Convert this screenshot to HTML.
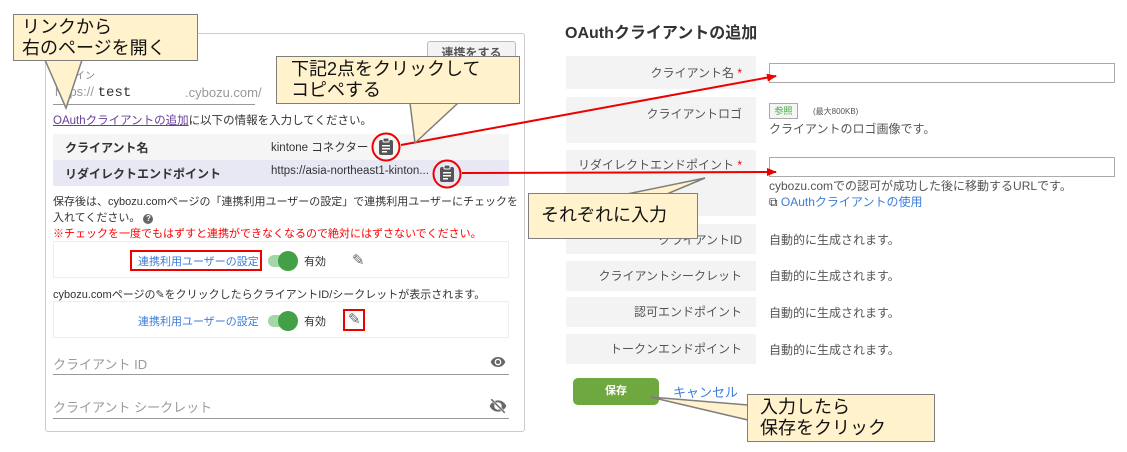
<!DOCTYPE html>
<html><head><meta charset="utf-8"><style>
*{margin:0;padding:0;box-sizing:border-box}
body{width:1127px;height:452px;background:#fff;position:relative;overflow:hidden;font-family:"Liberation Sans","Noto Sans CJK JP",sans-serif;color:#333;font-size:12px}
.a{position:absolute;white-space:nowrap}
.co{position:absolute;background:#fff2cc;border:1.5px solid #7f7f7f;font-size:17px;line-height:21px;color:#111;padding:0 0 0 8px}
.lc{position:absolute;left:566px;width:190px;background:#f3f3f3;text-align:right;padding-right:14px;color:#555;font-size:12px}
.rt{position:absolute;left:769px;color:#555;font-size:12px}
.inp{position:absolute;left:769px;width:346px;height:20px;border:1px solid #aaa;background:#fff}
.tg{position:absolute;width:26px;height:12px;border-radius:6px;background:#a5d6a7}
.tg i{position:absolute;right:-4px;top:-4px;width:20px;height:20px;border-radius:50%;background:#43a047}
</style></head><body>
<!-- left panel -->
<div class="a" style="left:45px;top:33px;width:480px;height:399px;border:1px solid #ccc;border-radius:3px"></div>
<div class="a" style="left:427px;top:41px;width:89px;height:25px;border:1px solid #bbb;background:#f3f3f3;border-radius:3px;font-size:12px;font-weight:bold;color:#555;text-align:center;line-height:23px">連携をする</div>
<div class="a" style="left:55px;top:48px;font-size:16px;font-weight:bold;color:#333">ns</div>
<div class="a" style="left:55px;top:67px;font-size:10px;color:#888">ドメイン</div>
<div class="a" style="left:55px;top:84px;font-size:13px;color:#999">https:// <span style="color:#333;font-family:'Liberation Mono',monospace;font-size:14px">test</span></div>
<div class="a" style="left:185px;top:85px;font-size:13px;color:#999">.cybozu.com/</div>
<div class="a" style="left:53px;top:104px;width:202px;height:1px;background:#999"></div>
<div class="a" style="left:53px;top:112px;font-size:11.5px"><span style="color:#6a3d9a;text-decoration:underline">OAuthクライアントの追加</span>に以下の情報を入力してください。</div>
<div class="a" style="left:53px;top:134px;width:456px;height:26px;background:#f5f5f5"></div>
<div class="a" style="left:53px;top:160px;width:456px;height:26px;background:#e8e8f4"></div>
<div class="a" style="left:65px;top:139px;font-weight:bold;font-size:12px">クライアント名</div>
<div class="a" style="left:65px;top:165px;font-weight:bold;font-size:12px">リダイレクトエンドポイント</div>
<div class="a" style="left:271px;top:139px;font-size:11.5px">kintone コネクター</div>
<div class="a" style="left:271px;top:165px;font-size:11.5px">https://asia-northeast1-kinton...</div>
<svg class="a" style="left:370px;top:131px" width="32" height="32" viewBox="0 0 32 32"><circle cx="16" cy="16" r="13.5" fill="none" stroke="#e00" stroke-width="2"/><rect x="9" y="9" width="14" height="15" rx="2" fill="#555"/><rect x="13" y="7" width="6" height="4" rx="1" fill="#555" stroke="#fff" stroke-width="1"/><rect x="12" y="14" width="8" height="1.5" fill="#fff"/><rect x="12" y="17" width="8" height="1.5" fill="#fff"/><rect x="12" y="20" width="5" height="1.5" fill="#fff"/></svg>
<svg class="a" style="left:431px;top:158px" width="32" height="32" viewBox="0 0 32 32"><circle cx="16" cy="16" r="13.5" fill="none" stroke="#e00" stroke-width="2"/><rect x="9" y="9" width="14" height="15" rx="2" fill="#555"/><rect x="13" y="7" width="6" height="4" rx="1" fill="#555" stroke="#fff" stroke-width="1"/><rect x="12" y="14" width="8" height="1.5" fill="#fff"/><rect x="12" y="17" width="8" height="1.5" fill="#fff"/><rect x="12" y="20" width="5" height="1.5" fill="#fff"/></svg>
<div class="a" style="left:53px;top:194px;font-size:11px;line-height:16px">保存後は、cybozu.comページの「連携利用ユーザーの設定」で連携利用ユーザーにチェックを<br>入れてください。 <span style="display:inline-block;width:10px;height:10px;border-radius:50%;background:#666;color:#fff;font-size:8px;line-height:10px;text-align:center;font-weight:bold">?</span></div>
<div class="a" style="left:53px;top:225px;font-size:11px;color:#f00">※チェックを一度でもはずすと連携ができなくなるので絶対にはずさないでください。</div>
<div class="a" style="left:53px;top:241px;width:456px;height:37px;border:1px solid #eee"></div>
<div class="a" style="left:130px;top:250px;width:132px;height:21px;border:2px solid #e00"></div>
<div class="a" style="left:138px;top:253px;font-size:11px;color:#3b7dd8">連携利用ユーザーの設定</div>
<div class="tg" style="left:268px;top:255px"><i></i></div>
<div class="a" style="left:304px;top:253px;font-size:11px">有効</div>
<div class="a" style="left:352px;top:251px;font-size:15px;color:#666">✎</div>
<div class="a" style="left:53px;top:286px;font-size:11px">cybozu.comページの✎をクリックしたらクライアントID/シークレットが表示されます。</div>
<div class="a" style="left:53px;top:301px;width:456px;height:37px;border:1px solid #eee"></div>
<div class="a" style="left:138px;top:313px;font-size:11px;color:#3b7dd8">連携利用ユーザーの設定</div>
<div class="tg" style="left:268px;top:315px"><i></i></div>
<div class="a" style="left:304px;top:313px;font-size:11px">有効</div>
<div class="a" style="left:343px;top:309px;width:22px;height:22px;border:2px solid #e00"></div>
<div class="a" style="left:348px;top:310px;font-size:15px;color:#666">✎</div>
<div class="a" style="left:53px;top:354px;font-size:13px;color:#999">クライアント ID</div>
<div class="a" style="left:53px;top:374px;width:456px;height:1px;background:#999"></div>
<div class="a" style="left:53px;top:397px;font-size:13px;color:#999">クライアント シークレット</div>
<div class="a" style="left:53px;top:418px;width:456px;height:1px;background:#999"></div>
<svg class="a" style="left:488px;top:354px" width="20" height="16" viewBox="0 0 24 24"><path d="M12 4.5C7 4.5 2.7 7.6 1 12c1.7 4.4 6 7.5 11 7.5s9.3-3.1 11-7.5c-1.7-4.4-6-7.5-11-7.5zM12 17a5 5 0 110-10 5 5 0 010 10zm0-8a3 3 0 100 6 3 3 0 000-6z" fill="#666"/></svg>
<svg class="a" style="left:488px;top:397px" width="20" height="18" viewBox="0 0 24 24"><path d="M12 4.5C7 4.5 2.7 7.6 1 12c1.7 4.4 6 7.5 11 7.5s9.3-3.1 11-7.5c-1.7-4.4-6-7.5-11-7.5zM12 17a5 5 0 110-10 5 5 0 010 10z" fill="#666"/><path d="M3 3l18 18" stroke="#fff" stroke-width="3.5"/><path d="M3 3l18 18" stroke="#666" stroke-width="2"/></svg>

<!-- right panel -->
<div class="a" style="left:565px;top:19px;font-size:16px;font-weight:bold;color:#333">OAuthクライアントの追加</div>
<div class="lc" style="top:56px;height:33px;padding-top:8px">クライアント名 <span style="color:#e00">*</span></div>
<div class="lc" style="top:97px;height:46px;padding-top:8px">クライアントロゴ</div>
<div class="lc" style="top:150px;height:66px;padding-top:6px">リダイレクトエンドポイント <span style="color:#e00">*</span></div>
<div class="lc" style="top:224px;height:30px;padding-top:7px">クライアントID</div>
<div class="lc" style="top:261px;height:30px;padding-top:6px">クライアントシークレット</div>
<div class="lc" style="top:297px;height:30px;padding-top:6px">認可エンドポイント</div>
<div class="lc" style="top:334px;height:30px;padding-top:6px">トークンエンドポイント</div>
<div class="inp" style="top:63px"></div>
<div class="a" style="left:769px;top:103px;width:29px;height:16px;border:1px solid #aaa;background:#f5f5f5;font-size:9px;color:#4a4;text-align:center;line-height:14px">参照</div>
<div class="a" style="left:813px;top:106px;font-size:8px;color:#555">(最大800KB)</div>
<div class="rt" style="top:120px">クライアントのロゴ画像です。</div>
<div class="inp" style="top:157px"></div>
<div class="rt" style="top:177px">cybozu.comでの認可が成功した後に移動するURLです。</div>
<div class="rt" style="top:193px;color:#3b7dd8"><span style="color:#333">⧉</span> OAuthクライアントの使用</div>
<div class="rt" style="top:231px">自動的に生成されます。</div>
<div class="rt" style="top:267px">自動的に生成されます。</div>
<div class="rt" style="top:304px">自動的に生成されます。</div>
<div class="rt" style="top:341px">自動的に生成されます。</div>
<div class="a" style="left:573px;top:378px;width:86px;height:27px;border-radius:5px;background:#6fa83f;color:#fff;font-size:11px;font-weight:bold;text-align:center;line-height:27px">保存</div>
<div class="a" style="left:673px;top:382px;font-size:13px;color:#3b7dd8">キャンセル</div>

<!-- arrows & callout tails -->
<svg class="a" style="left:0;top:0" width="1127" height="452">
<defs><marker id="m" markerWidth="10" markerHeight="8" refX="9" refY="4" orient="auto" markerUnits="userSpaceOnUse"><path d="M0 0L10 4L0 8z" fill="#e00"/></marker></defs>
<line x1="401" y1="145" x2="776" y2="76" stroke="#e00" stroke-width="2" marker-end="url(#m)"/>
<line x1="462" y1="173" x2="776" y2="172" stroke="#e00" stroke-width="2" marker-end="url(#m)"/>
<polygon points="45,60 66,108 82,60" fill="#fff2cc" stroke="#7f7f7f" stroke-width="1.5"/>
<polygon points="410,103 415,143 458,103" fill="#fff2cc" stroke="#7f7f7f" stroke-width="1.5"/>
<polygon points="627,194 705,178 667,194" fill="#fff2cc" stroke="#7f7f7f" stroke-width="1.5"/>
<polygon points="748,405 650,397 748,420" fill="#fff2cc" stroke="#7f7f7f" stroke-width="1.5"/>
</svg>
<div class="co" style="left:13px;top:14px;width:185px;height:47px;padding-top:2px;font-size:18px">リンクから<br>右のページを開く</div>
<div class="co" style="left:276px;top:56px;width:244px;height:48px;padding:2px 0 0 14px;font-size:18px">下記2点をクリックして<br>コピペする</div>
<div class="co" style="left:528px;top:193px;width:170px;height:46px;padding-top:11px;padding-left:12px;font-size:18px">それぞれに入力</div>
<div class="co" style="left:747px;top:394px;width:188px;height:48px;padding:2px 0 0 12px;font-size:18px">入力したら<br>保存をクリック</div>
</body></html>
